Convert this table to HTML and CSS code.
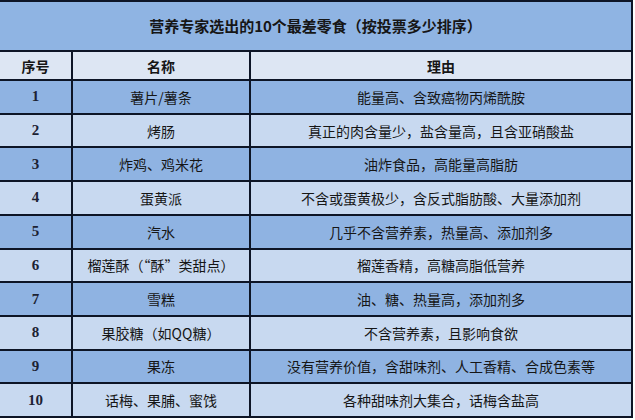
FILE: index.html
```html
<!DOCTYPE html>
<html lang="zh-CN">
<head>
<meta charset="utf-8">
<title>营养专家选出的10个最差零食</title>
<link rel="stylesheet" href="styles.css">
</head>
<body>
<div class="sheet">
  <div class="cell title">营养专家选出的10个最差零食（按投票多少排序）</div>
  <div class="cell head">序号</div>
  <div class="cell head">名称</div>
  <div class="cell head">理由</div>

  <div class="cell num dark">1</div>
  <div class="cell dark">薯片/薯条</div>
  <div class="cell dark">能量高、含致癌物丙烯酰胺</div>

  <div class="cell num light">2</div>
  <div class="cell light">烤肠</div>
  <div class="cell light">真正的肉含量少，盐含量高，且含亚硝酸盐</div>

  <div class="cell num dark">3</div>
  <div class="cell dark">炸鸡、鸡米花</div>
  <div class="cell dark">油炸食品，高能量高脂肪</div>

  <div class="cell num light">4</div>
  <div class="cell light">蛋黄派</div>
  <div class="cell light">不含或蛋黄极少，含反式脂肪酸、大量添加剂</div>

  <div class="cell num dark">5</div>
  <div class="cell dark">汽水</div>
  <div class="cell dark">几乎不含营养素，热量高、添加剂多</div>

  <div class="cell num light">6</div>
  <div class="cell light">榴莲酥（“酥”类甜点）</div>
  <div class="cell light">榴莲香精，高糖高脂低营养</div>

  <div class="cell num dark">7</div>
  <div class="cell dark">雪糕</div>
  <div class="cell dark">油、糖、热量高，添加剂多</div>

  <div class="cell num light">8</div>
  <div class="cell light">果胶糖（如QQ糖）</div>
  <div class="cell light">不含营养素，且影响食欲</div>

  <div class="cell num dark">9</div>
  <div class="cell dark">果冻</div>
  <div class="cell dark">没有营养价值，含甜味剂、人工香精、合成色素等</div>

  <div class="cell num light">10</div>
  <div class="cell light">话梅、果脯、蜜饯</div>
  <div class="cell light">各种甜味剂大集合，话梅含盐高</div>
</div>
</body>
</html>
```

FILE: styles.css
```css
html, body {
  margin: 0;
  padding: 0;
  background: #ffffff;
}

.sheet {
  width: 633px;
  height: 418px;
  box-sizing: border-box;
  padding: 2px 2px 2px 0;
  background: #0d1526;
  display: grid;
  grid-template-columns: 71px 176px 1fr;
  grid-template-rows: 48px 27px repeat(10, 1fr);
  gap: 2px;
  font-family: "Noto Sans CJK SC", "Noto Sans", sans-serif;
  font-size: 14px;
  color: #161616;
}

.cell {
  display: flex;
  align-items: center;
  justify-content: center;
  white-space: nowrap;
  line-height: 1;
}

.title {
  grid-column: 1 / 4;
  background: #8fb4e3;
  font-size: 15px;
  font-weight: 700;
  padding-bottom: 1px;
}

.head {
  background: #dde6f3;
  font-weight: 700;
}

.dark {
  background: #8fb3e2;
}

.light {
  background: #c8d9f0;
}

.num {
  font-family: "Liberation Serif", "Times New Roman", serif;
  font-weight: 700;
  font-size: 15px;
  color: #1c2233;
}
```
